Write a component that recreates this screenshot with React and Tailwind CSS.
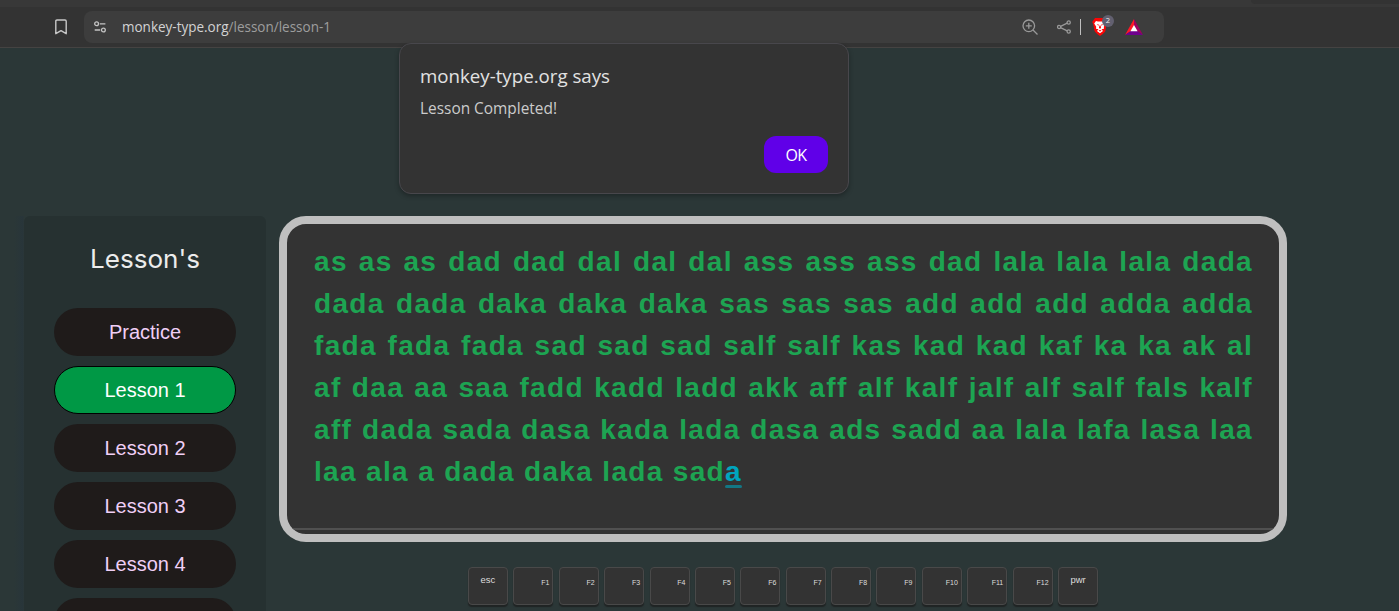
const lines = [
  "as as as dad dad dal dal dal ass ass ass dad lala lala lala dada",
  "dada dada daka daka daka sas sas sas add add add adda adda",
  "fada fada fada sad sad sad salf salf kas kad kad kaf ka ka ak al",
  "af daa aa saa fadd kadd ladd akk aff alf kalf jalf alf salf fals kalf",
  "aff dada sada dasa kada lada dasa ads sadd aa lala lafa lasa laa",
];
const lessons = ["Practice", "Lesson 1", "Lesson 2", "Lesson 3", "Lesson 4", ""];
const keys = ["esc", "F1", "F2", "F3", "F4", "F5", "F6", "F7", "F8", "F9", "F10", "F11", "F12", "pwr"];

function Toolbar() {
  return (
    <header className="h-12 shrink-0 border-b border-[#454342] bg-[#333333]">
      <div className="flex h-[7px] bg-[#383838]">
        <div className="ml-auto h-[4px] w-[148px] rounded-bl-md bg-[#333333]" />
      </div>
      <div className="flex items-center pt-1">
        <svg className="ml-[54px] h-4 w-[14px]" viewBox="0 0 14 16" fill="none" stroke="#c8c8c8" strokeWidth="1.4" strokeLinejoin="round">
          <path d="M1.8 2.2Q1.8 1 3 1H11Q12.2 1 12.2 2.2V14.7L7 11.6L1.8 14.7Z" />
        </svg>
        <div className="ml-4 flex h-8 w-[1080px] items-center rounded-lg bg-[#3d3d3d]">
          <svg className="ml-[9px] h-[14px] w-[14px] shrink-0" viewBox="0 0 14 14" fill="none" stroke="#c4c4c4" strokeWidth="1.3">
            <circle cx="3.6" cy="3.8" r="1.9" />
            <circle cx="10.4" cy="10" r="1.9" />
            <path d="M6.8 3.8H12.4M1.7 10H7.2" />
          </svg>
          <svg className="ml-[15px] h-6 w-[210px] shrink-0 overflow-visible" viewBox="0 0 210 24">
            <text x="0" y="17" textLength="209" lengthAdjust="spacingAndGlyphs" fontFamily="Open Sans, Noto Sans, sans-serif" fontSize="14.5" fill="#9d9d9d">
              <tspan fill="#d3d3d3">monkey-type.org</tspan>/lesson/lesson-1
            </text>
          </svg>
          <div className="ml-auto flex items-center pr-[21px]">
            <svg className="h-4 w-4" viewBox="0 0 16 16" fill="none" stroke="#999999" strokeWidth="1.3">
              <circle cx="6.8" cy="6.8" r="5.8" />
              <path d="M11 11L15.5 15.5M6.8 3.8V9.8M3.8 6.8H9.8" />
            </svg>
            <svg className="ml-[19px] h-[14px] w-[14px]" viewBox="0 0 14 14" fill="none" stroke="#999999" strokeWidth="1.3">
              <circle cx="2.1" cy="7" r="1.6" />
              <circle cx="11.7" cy="2.5" r="1.6" />
              <circle cx="11.7" cy="11.5" r="1.6" />
              <path d="M3.6 6.3L10.2 3.2M3.6 7.7L10.2 10.8" />
            </svg>
            <div className="ml-[9px] h-4 w-px bg-[#c0c0c0]" />
            <div className="relative ml-[11px] h-[18px] w-4">
              <svg className="h-[18px] w-4" viewBox="0 0 16 18">
                <path fill="#fb0505" d="M3 0H13L15 3L14.4 6L13.4 13Q12.8 14.6 8 18Q3.2 14.6 2.6 13L1.2 6L.2 4Z" />
                <path fill="#fff" d="M4 3L6 3.5H10L12 3L13.8 5.5L11.8 8.7L12 10.8L9.5 11.3L11 13L8 15.2L5 13L6.5 11.3L4 10.8L4.2 8.7L2.2 5.5Z" />
                <path fill="#fb0505" d="M4.8 6.1L7 6.8L6.3 7.8ZM11.2 6.1L9 6.8L9.7 7.8ZM7.4 7.4H8.6L9 10L8 10.7L7 10ZM6.5 12.6L8 11.9L9.5 12.6L8 13.5Z" />
              </svg>
              <span className="absolute -top-[3px] left-[10px] flex h-3 w-3 items-center justify-center rounded-full bg-[#626070] font-['Open_Sans',sans-serif] text-[7.5px] leading-none text-[#eeeeee]">2</span>
            </div>
            <svg className="ml-[17px] h-4 w-[18px]" viewBox="0 0 18 16">
              <path fill="#ff1827" d="M9 0L0 16L6 12L9 7Z" />
              <path fill="#9e005f" d="M9 0L18 16L12 12L9 7Z" />
              <path fill="#6f008d" d="M0 16L5.8 12H12.2L18 16Z" />
              <path fill="#fff" d="M9 6L12.6 12.2H5.4Z" />
            </svg>
          </div>
        </div>
      </div>
    </header>
  );
}

function Sidebar() {
  return (
    <aside className="flex h-[620px] w-[242px] shrink-0 flex-col items-center rounded-md bg-[#263131]">
      <svg className="mt-6 h-10 w-[110px] overflow-visible" viewBox="0 0 110 40">
        <text x="0" y="28" textLength="110" lengthAdjust="spacingAndGlyphs" fontFamily="Inter, sans-serif" fontSize="25.5" fill="#ececec">Lesson's</text>
      </svg>
      <div className="mt-7 flex flex-col gap-[10px] font-['Liberation_Sans',sans-serif] text-[20px]">
        {lessons.map((name, i) => (
          <button key={i} className={i === 1 ? "h-12 w-[182px] rounded-full border border-black bg-[#009845] text-white" : "h-12 w-[182px] rounded-full bg-[#1f1b1a] text-[#f0cff6]"}>
            {name}
          </button>
        ))}
      </div>
    </aside>
  );
}

function TypingPanel() {
  return (
    <section className="flex h-[326px] w-[1008px] flex-col overflow-hidden rounded-[27px] border-8 border-[#bfbfbf] bg-[#333333]">
      <div className="pt-[17px] pr-[26px] pl-[27px] font-['Liberation_Sans',sans-serif] text-[28px] leading-[42px] font-bold tracking-[1.34px] text-[#1da452]">
        {lines.map((line) => (
          <p key={line} className="text-justify [text-align-last:justify]">{line}</p>
        ))}
        <p>
          laa ala a dada daka lada sad
          <span className="relative inline-block text-[#00a5bf]">
            a
            <span className="absolute bottom-[5px] left-0 h-[3px] w-full rounded-sm bg-[#137785]" />
          </span>
        </p>
      </div>
      <div className="mt-auto h-[6px] border-t-2 border-[#505050]" />
    </section>
  );
}

function Keyboard() {
  return (
    <div className="mt-[25px] flex gap-[5.4px] font-['Liberation_Sans',sans-serif]">
      {keys.map((key, i) => (
        <div key={key} className={i === 0 || i === 13 ? "flex h-[38px] w-10 justify-center rounded-[4px] border border-[#494949] bg-[#333333] pt-[6px] text-[9.5px] leading-[12px] text-[#dddddd] shadow-[0_2px_1px_#202424]" : "flex h-[38px] w-10 justify-end rounded-[4px] border border-[#494949] bg-[#333333] pt-[9px] pr-[3px] text-[7px] leading-[12px] text-[#dddddd] shadow-[0_2px_1px_#202424]"}>
          {key}
        </div>
      ))}
    </div>
  );
}

function Alert() {
  return (
    <div className="absolute top-[43px] left-[399px] flex h-[151px] w-[450px] flex-col rounded-xl border border-[#48474c] bg-[#333333] px-5 pt-[20px] shadow-[0_2px_5px_rgba(0,0,0,0.3)]">
      <svg className="h-[52px] w-[200px] overflow-visible" viewBox="0 0 200 52" fontFamily="Open Sans, Noto Sans, sans-serif">
        <text x="0" y="19" textLength="190" lengthAdjust="spacingAndGlyphs" fontSize="18" fontWeight="500" fill="#e2e2e2">monkey-type.org says</text>
        <text x="0" y="50" textLength="137" lengthAdjust="spacingAndGlyphs" fontSize="15.5" fill="#cccccc">Lesson Completed!</text>
      </svg>
      <button className="mt-5 flex h-[37px] w-16 items-center justify-center self-end rounded-[12px] bg-[#6000e8] font-['Open_Sans',sans-serif] text-[16px] font-medium tracking-[-0.6px] text-white">OK</button>
    </div>
  );
}

export default function App() {
  return (
    <div className="relative flex h-[611px] w-[1399px] flex-col overflow-hidden bg-[#2b3737]">
      <Toolbar />
      <main className="mt-[168px] flex bg-[linear-gradient(90deg,transparent_14px,#28353a_23px,transparent_24px)] pl-6">
        <Sidebar />
        <div className="ml-[13px] flex flex-col items-center">
          <TypingPanel />
          <Keyboard />
        </div>
      </main>
      <Alert />
    </div>
  );
}
